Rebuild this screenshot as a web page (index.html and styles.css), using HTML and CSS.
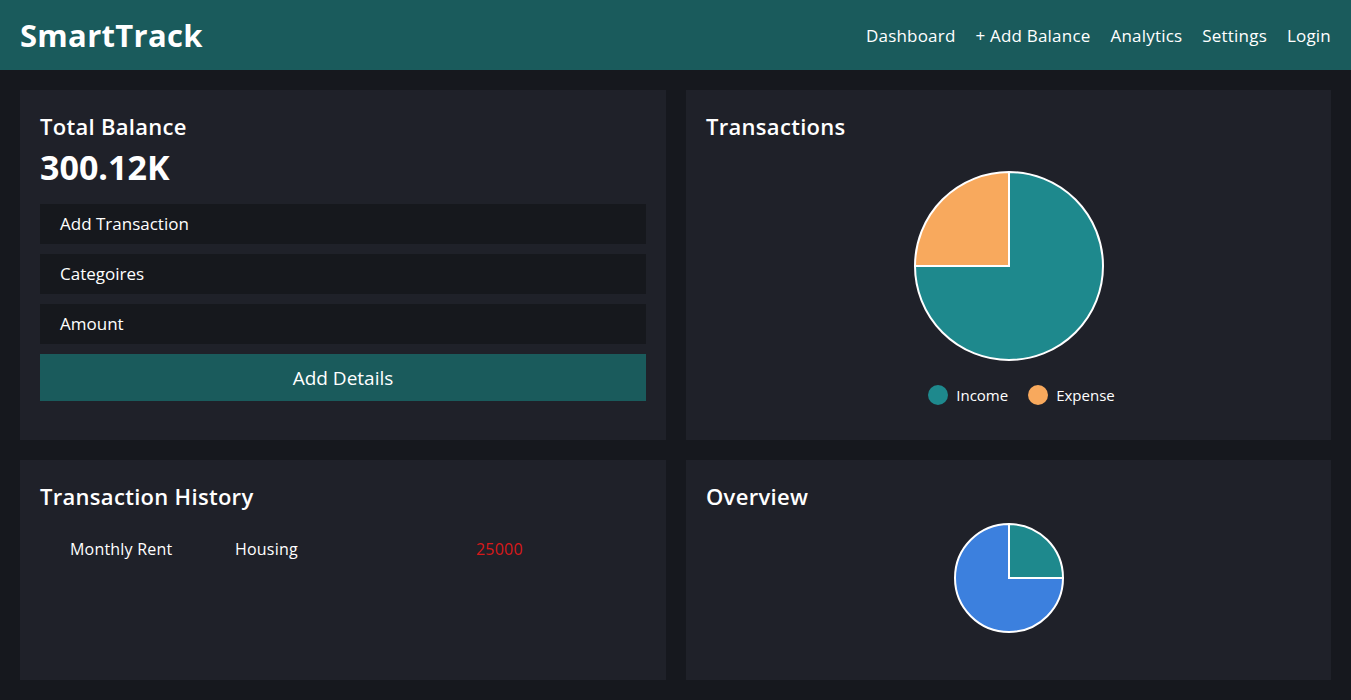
FILE: index.html
```html
<!DOCTYPE html>
<html lang="en">
<head>
<meta charset="utf-8">
<title>SmartTrack</title>
<link rel="stylesheet" href="styles.css">
</head>
<body>
<header class="topbar">
  <div class="logo">SmartTrack</div>
  <nav class="nav">
    <a href="#">Dashboard</a>
    <a href="#">+ Add Balance</a>
    <a href="#">Analytics</a>
    <a href="#">Settings</a>
    <a href="#">Login</a>
  </nav>
</header>
<main class="grid">
  <section class="card balance-card">
    <h2 class="card-title">Total Balance</h2>
    <div class="balance">300.12K</div>
    <div class="form">
      <div class="field">Add Transaction</div>
      <div class="field">Categoires</div>
      <div class="field">Amount</div>
      <button class="btn">Add Details</button>
    </div>
  </section>
  <section class="card">
    <h2 class="card-title">Transactions</h2>
    <div class="chart-wrap">
      <svg class="pie-big" width="192" height="192" viewBox="0 0 192 192">
        <path d="M96 96 L96 2 A94 94 0 1 1 2 96 Z" fill="#1e898d" stroke="#fff" stroke-width="2" stroke-linejoin="miter"/>
        <path d="M96 96 L2 96 A94 94 0 0 1 96 2 Z" fill="#f8a95d" stroke="#fff" stroke-width="2"/>
      </svg>
      <div class="legend">
        <span class="legend-item"><span class="dot dot-income"></span>Income</span>
        <span class="legend-item"><span class="dot dot-expense"></span>Expense</span>
      </div>
    </div>
  </section>
  <section class="card">
    <h2 class="card-title">Transaction History</h2>
    <div class="history">
      <div class="row">
        <span class="cell">Monthly Rent</span>
        <span class="cell">Housing</span>
        <span class="cell amount">25000</span>
      </div>
    </div>
  </section>
  <section class="card">
    <h2 class="card-title">Overview</h2>
    <div class="chart-wrap small">
      <svg class="pie-small" width="112" height="112" viewBox="0 0 112 112">
        <path d="M56 56 L110 56 A54 54 0 1 1 56 2 Z" fill="#3c80de" stroke="#fff" stroke-width="2"/>
        <path d="M56 56 L56 2 A54 54 0 0 1 110 56 Z" fill="#1e898d" stroke="#fff" stroke-width="2"/>
      </svg>
    </div>
  </section>
</main>
</body>
</html>
```
FILE: styles.css
```css
* { box-sizing: border-box; }
html, body { margin: 0; padding: 0; }
body {
  background: #16181e;
  color: #ffffff;
  font-family: "Open Sans", "Noto Sans", sans-serif;
  height: 700px;
  overflow: hidden;
}
.topbar {
  height: 70px;
  background: #1a5b5c;
  display: flex;
  align-items: center;
  justify-content: space-between;
  padding: 0 20px;
}
.logo {
  font-size: 31px;
  font-weight: 700;
  letter-spacing: 0.3px;
}
.nav {
  display: flex;
  gap: 20px;
}
.nav a {
  color: #fff;
  text-decoration: none;
  font-size: 17px;
  letter-spacing: 0.2px;
}
.grid {
  display: grid;
  grid-template-columns: 646px 645px;
  grid-template-rows: 350px 220px;
  gap: 20px;
  padding: 20px;
}
.card {
  background: #1f2129;
  padding: 20px;
  display: flex;
  flex-direction: column;
}
.card-title {
  margin: 0;
  font-size: 22px;
  font-weight: 600;
  line-height: 32px;
  letter-spacing: 0.3px;
}
.balance {
  font-size: 34px;
  font-weight: 700;
  line-height: 48px;
  margin: 1px 0 13px;
}
.form {
  display: flex;
  flex-direction: column;
  gap: 10px;
}
.field {
  height: 40px;
  background: #16181d;
  padding-left: 20px;
  display: flex;
  align-items: center;
  font-size: 17px;
  padding-bottom: 1px;
}
.btn {
  height: 47px;
  background: #1a5b5c;
  color: #fff;
  border: 0;
  font-family: inherit;
  font-size: 19px;
}
.chart-wrap {
  display: flex;
  flex-direction: column;
  align-items: center;
  margin-top: 28px;
}
.chart-wrap.small { margin-top: 10px; }
.legend {
  display: flex;
  gap: 20px;
  margin-top: 23px;
  margin-left: 26px;
  font-size: 15px;
}
.legend-item {
  display: flex;
  align-items: center;
  gap: 8px;
}
.dot {
  width: 20px;
  height: 20px;
  border-radius: 50%;
  display: inline-block;
}
.dot-income { background: #1e898d; }
.dot-expense { background: #f8a95d; }
.history { margin-top: 17px; }
.row {
  display: grid;
  grid-template-columns: 165px 241px 1fr;
}
.cell {
  padding: 10px 30px;
  font-size: 16px;
  line-height: 20px;
  letter-spacing: 0.2px;
}
.amount { color: #d8191a; }
```
